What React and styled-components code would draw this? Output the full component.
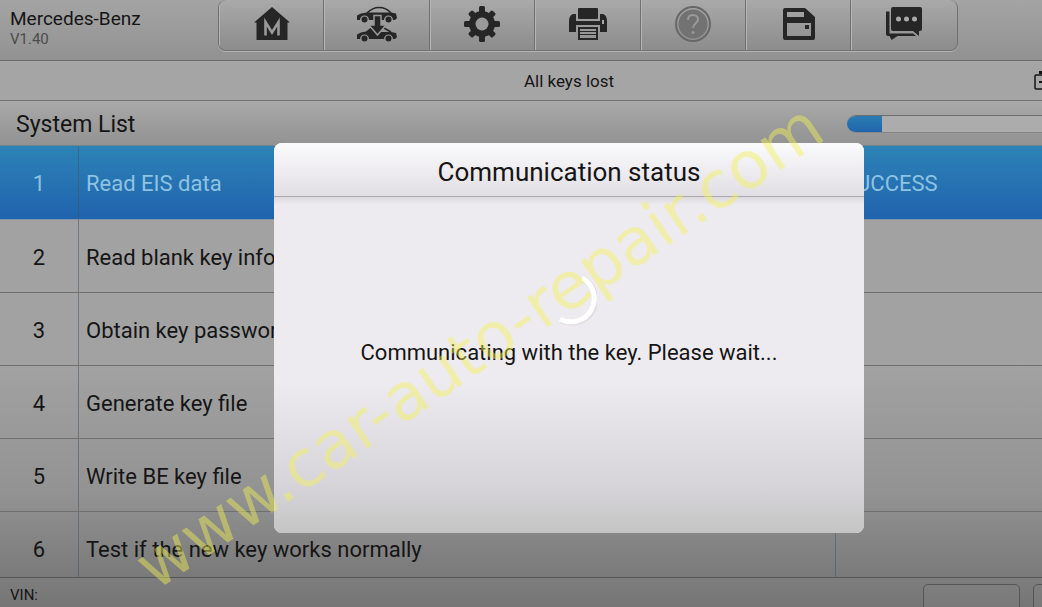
import React from "react";
import styled, { createGlobalStyle } from "styled-components";

const GlobalStyle = createGlobalStyle`
    * {
        box-sizing: border-box;
    }
    html, body, #root {
        height: 100%;
        margin: 0;
    }
    body {
        overflow: hidden;
        background: #8f8f8f;
        font-family: Roboto, "Liberation Sans", sans-serif;
        color: #151515;
    }
`;

const steps = [
    { id: 1, name: "Read EIS data", result: "SUCCESS" },
    { id: 2, name: "Read blank key information" },
    { id: 3, name: "Obtain key password" },
    { id: 4, name: "Generate key file" },
    { id: 5, name: "Write BE key file" },
    { id: 6, name: "Test if the new key works normally" },
];

const HomeIcon = () => (
    <svg width="38" height="36" viewBox="0 0 38 36">
        <path fill="#262626" d="M19 1 37 16.500H34.500V34H3.500V16.500H1Z" />
        <path fill="none" stroke="#999" strokeWidth="2.600" d="M12.500 29.500V16L19 26.500 25.500 16V29.500" />
    </svg>
);

const CarsIcon = () => (
    <svg width="42" height="36" viewBox="0 0 42 36">
        <g fill="none" stroke="#262626" strokeWidth="1.500">
            <path d="M11 7C15 3 18 1.500 23 1.500 29 1.500 32 3.500 35 7" />
            <path d="M27 21.500 35 26" />
        </g>
        <g fill="#262626">
            <path d="M1 13V9.500L5 7.500 11 6.500H35L40 7.500 41 12 39 14H37A4.500 4.500 0 0 0 28 14H13A4.500 4.500 0 0 0 4 14H1Z" />
            <circle cx="8.500" cy="13.500" r="3" />
            <circle cx="32.500" cy="13.500" r="3" />
            <path d="M1 32V28.500L5 26.500 10 25.500 15 21.500 20 26H35L40 27 41 31 39 33H37A4.500 4.500 0 0 0 28 33H13A4.500 4.500 0 0 0 4 33H1Z" />
            <circle cx="8.500" cy="32.500" r="3" />
            <circle cx="32.500" cy="32.500" r="3" />
        </g>
        <path fill="#262626" stroke="#999" strokeWidth="1.500" d="M18 9.500H25V19H30L21.500 29 13 19H18Z" />
    </svg>
);

const GearIcon = () => (
    <svg width="36" height="36" viewBox="-18 -18 36 36">
        <g fill="#262626">
            <circle r="13" />
            {[0, 45, 90, 135, 180, 225, 270, 315].map((angle) => (
                <rect key={angle} x="-3" y={angle % 90 ? -17 : -18} width="6" height="8" rx="1.500" transform={`rotate(${angle})`} />
            ))}
        </g>
        <circle r="6.500" fill="#9a9a9a" />
    </svg>
);

const PrinterIcon = () => (
    <svg width="40" height="34" viewBox="0 0 40 34">
        <g fill="#262626">
            <rect x="10" y="1" width="20" height="11" rx="1" />
            <path d="M5 7H8V14H32V7H35C38 8 39 11 39 14V25H32V18H8V25H1V14C1 11 2 8 5 7Z" />
            <path fillRule="evenodd" d="M10 20H30V33H10ZM12 22V31H28V22Z" />
            <path d="M12 24H28V25H12ZM12 27H28V28H12Z" />
        </g>
        <rect x="34" y="13" width="2" height="4" fill="#aaa" />
    </svg>
);

const HelpIcon = () => (
    <svg width="38" height="38" viewBox="0 0 38 38">
        <circle cx="19" cy="19" r="17" fill="none" stroke="#676767" strokeWidth="2" />
        <circle cx="19" cy="19" r="14.500" fill="#727272" />
        <path fill="none" stroke="#999" strokeWidth="2" d="M14 15C14 11.500 16 10 19 10S24 12 24 14.500C24 18 19 18.500 19 23" />
        <circle cx="19" cy="27.500" r="1.500" fill="#999" />
    </svg>
);

const SaveIcon = () => (
    <svg width="34" height="34" viewBox="0 0 34 34">
        <path
            fill="#262626"
            fillRule="evenodd"
            d="M3 1H23L33 10V31Q33 33 31 33H3Q1 33 1 31V3Q1 1 3 1ZM5 5V10H22V5ZM5 16V29H29V16Z"
        />
        <rect x="23" y="18" width="4" height="4" fill="#262626" />
    </svg>
);

const ChatIcon = () => (
    <svg width="38" height="36" viewBox="0 0 38 36">
        <path fill="#262626" d="M1 5.500H4.500V27.500H28L31 30H12.500L6.500 34 4.500 30H3Q1 30 1 28Z" />
        <path fill="#262626" d="M8 1H35Q37 1 37 3V23Q37 25 35 25H34V30L28 25H8Q6 25 6 23V3Q6 1 8 1Z" />
        <g fill="#aaa">
            <circle cx="13.500" cy="13" r="2.500" />
            <circle cx="21.500" cy="13" r="2.500" />
            <circle cx="29.500" cy="13" r="2.500" />
        </g>
    </svg>
);

const BatteryIcon = () => (
    <svg width="28" height="20" viewBox="0 0 28 20">
        <rect x="1" y="4" width="26" height="14" rx="1" fill="none" stroke="#151515" strokeWidth="1.500" />
        <path fill="#151515" d="M5 0H11V3H5ZM17 0H23V3H17ZM5 10H10V12H5ZM18 10H23V12H18Z" />
    </svg>
);

const tools = [
    { label: "Home", icon: <HomeIcon /> },
    { label: "Change vehicle", icon: <CarsIcon /> },
    { label: "Settings", icon: <GearIcon /> },
    { label: "Print", icon: <PrinterIcon /> },
    { label: "Help", icon: <HelpIcon />, disabled: true },
    { label: "Save", icon: <SaveIcon /> },
    { label: "Messages", icon: <ChatIcon /> },
];

const App = () => {
    return (
        <>
            <GlobalStyle />
            <Viewport>
                <Screen>
                    <Header>
                        <Brand>
                            <BrandName>Mercedes-Benz</BrandName>
                            <Version>V1.40</Version>
                        </Brand>
                        <Toolbar>
                            {tools.map(({ label, icon, disabled }) => (
                                <ToolButton key={label} aria-label={label} disabled={disabled}>
                                    {icon}
                                </ToolButton>
                            ))}
                        </Toolbar>
                    </Header>
                    <StatusBar>
                        <span />
                        <span>All keys lost</span>
                        <Battery><BatteryIcon /></Battery>
                    </StatusBar>
                    <SectionBar>
                        <SectionTitle>System List</SectionTitle>
                        <Track role="progressbar" aria-label="Progress" aria-valuenow={13}>
                            <Fill style={{ width: "13%" }} />
                        </Track>
                    </SectionBar>
                    <ListArea>
                        <StepTable>
                            <tbody>
                                {steps.map(({ id, name, result }) => (
                                    <StepRow key={id} $active={id === 1}>
                                        <NumberCell>{id}</NumberCell>
                                        <NameCell>{name}</NameCell>
                                        <ResultCell>{result}</ResultCell>
                                    </StepRow>
                                ))}
                            </tbody>
                        </StepTable>
                    </ListArea>
                    <Footer>
                        <Vin>VIN:</Vin>
                        <FooterButton aria-label="Previous" />
                        <FooterButton aria-label="Next" />
                    </Footer>
                    <Overlay>
                        <Dialog role="dialog" aria-labelledby="dialog-title">
                            <DialogTitle id="dialog-title">Communication status</DialogTitle>
                            <DialogBody>
                                <svg width="56" height="56" viewBox="0 0 56 56">
                                    <path fill="none" stroke="#e0dee3" strokeWidth="6" d="M42 8A22 22 0 0 1 20 49" />
                                    <path fill="none" stroke="#fff" strokeWidth="5" d="M41 7A22 22 0 0 1 19 48" />
                                </svg>
                                <Message>Communicating with the key. Please wait...</Message>
                            </DialogBody>
                        </Dialog>
                    </Overlay>
                </Screen>
                <Watermark>www.car-auto-repair.com</Watermark>
            </Viewport>
        </>
    );
};

export default App;

const Viewport = styled.div`
    position: relative;
    height: 100%;
    overflow: hidden;
`;

/* the device screen runs past the right and bottom edges of the window */
const Screen = styled.main`
    position: relative;
    display: flex;
    flex-direction: column;
    width: calc(100% + 96px);
    height: calc(100% + 69px);
`;

const Header = styled.header`
    display: flex;
    flex: none;
    align-items: flex-start;
    height: 61px;
    background: linear-gradient(#a4a4a4, #929292);
    border-bottom: 1px solid #6c6c6c;
`;

const Brand = styled.div`
    width: 218px;
    padding: 8px 0 0 10px;
`;

const BrandName = styled.div`
    font-size: 19px;
    line-height: 22px;
`;

const Version = styled.div`
    font-size: 15px;
    line-height: 18px;
    color: #4c4c4c;
`;

const Toolbar = styled.nav`
    display: grid;
    grid-template-columns: repeat(7, 1fr);
    width: 65%;
    height: 51px;
    border: 1px solid #707070;
    border-top: none;
    border-radius: 8px;
    box-shadow: 0 1px 0 #b4b4b4;
    background: linear-gradient(#a9a9a9, #8c8c8c);
    overflow: hidden;
`;

const ToolButton = styled.button`
    display: flex;
    align-items: center;
    justify-content: center;
    padding: 0 0 2px;
    border: none;
    border-left: 1px solid #b5b5b5;
    border-right: 1px solid #707070;
    background: none;
    &:last-child {
        border-right: none;
    }
`;

const StatusBar = styled.div`
    display: grid;
    grid-template-columns: 1fr auto 1fr;
    flex: none;
    align-items: center;
    height: 40px;
    border-bottom: 1px solid #727272;
    background: #a5a5a5;
    font-size: 17px;
`;

const Battery = styled.span`
    display: flex;
    justify-content: flex-end;
    padding-right: 76px;
`;

const SectionBar = styled.div`
    display: flex;
    flex: none;
    align-items: center;
    justify-content: space-between;
    height: 45px;
    padding: 2px 21px 0 16px;
    border-bottom: 1px solid #74858c;
    background: linear-gradient(#a9a9a9, #929292);
`;

const SectionTitle = styled.h2`
    margin: 0;
    font-size: 23px;
    font-weight: 400;
`;

const Track = styled.div`
    width: 270px;
    height: 18px;
    border-top: 1px solid #6e6e6e;
    border-bottom: 1px solid #868686;
    border-radius: 9px;
    background: #acacac;
    overflow: hidden;
`;

const Fill = styled.div`
    height: 100%;
    background: linear-gradient(#2a7cb4, #2064ac);
`;

const ListArea = styled.div`
    flex: 1;
    min-height: 0;
    overflow: hidden;
    background: linear-gradient(#a2a2a2 50%, #939393 80%, #7a7a7a);
`;

const StepTable = styled.table`
    width: 100%;
    border-collapse: separate;
    border-spacing: 0;
    table-layout: fixed;
    font-size: 22px;
`;

const StepRow = styled.tr`
    height: ${(props) => (props.$active ? "74px" : "73px")};
    color: ${(props) => (props.$active ? "#8ec3e2" : "#151515")};
    background: ${(props) => (props.$active ? "linear-gradient(#2c83b6, #2062ae)" : "none")};
    td {
        border-bottom: 1px solid ${(props) => (props.$active ? "#8096a8" : "#6f6f6f")};
    }
`;

const Cell = styled.td`
    padding: 2px 7px 0;
    white-space: nowrap;
    overflow: hidden;
`;

const NumberCell = styled(Cell)`
    width: 79px;
    border-right: 1px solid rgba(70, 80, 90, 0.5);
    text-align: center;
`;

const NameCell = styled(Cell)`
    border-right: 1px solid rgba(70, 80, 90, 0.5);
`;

const ResultCell = styled(Cell)`
    width: 302px;
`;

const Footer = styled.footer`
    display: flex;
    flex: none;
    gap: 13px;
    height: 99px;
    padding: 6px 8px 24px 10px;
    border-top: 1px solid #555;
    background: linear-gradient(#7e7e7e, #727272 40%);
`;

const Vin = styled.div`
    flex: 1;
    font-size: 15px;
    line-height: 22px;
`;

const FooterButton = styled.button`
    width: 97px;
    border: 1px solid #555;
    border-radius: 5px;
    background: linear-gradient(#7e7e7e, #707070);
`;

const Overlay = styled.div`
    position: absolute;
    inset: 0;
    display: flex;
    align-items: center;
    justify-content: center;
`;

const Dialog = styled.section`
    display: flex;
    flex-direction: column;
    width: 590px;
    min-height: 390px;
    border-radius: 8px;
    background: #eeebf0;
    overflow: hidden;
`;

const DialogTitle = styled.h1`
    margin: 0;
    padding-top: 6px;
    border-bottom: 1px solid #aaa7ad;
    background: linear-gradient(#fbfafc, #e2dfe4);
    font-size: 26px;
    font-weight: 400;
    line-height: 47px;
    text-align: center;
`;

const DialogBody = styled.div`
    display: flex;
    flex: 1;
    flex-direction: column;
    align-items: center;
    padding-top: 74px;
    background: linear-gradient(#dddadf, #eeebf0 8px, #eeebf0 55%, #d8d5da 85%, #c4c5c4);
`;

const Message = styled.p`
    margin: 12px 0 0;
    font-size: 22px;
    line-height: 28px;
`;

const Watermark = styled.div`
    position: absolute;
    left: 46%;
    top: 57%;
    transform: translate(-50%, -50%) rotate(-34deg);
    color: rgba(242, 242, 84, 0.45);
    font-family: "DejaVu Sans", sans-serif;
    font-size: 65px;
    line-height: 1;
    white-space: nowrap;
    pointer-events: none;
`;
